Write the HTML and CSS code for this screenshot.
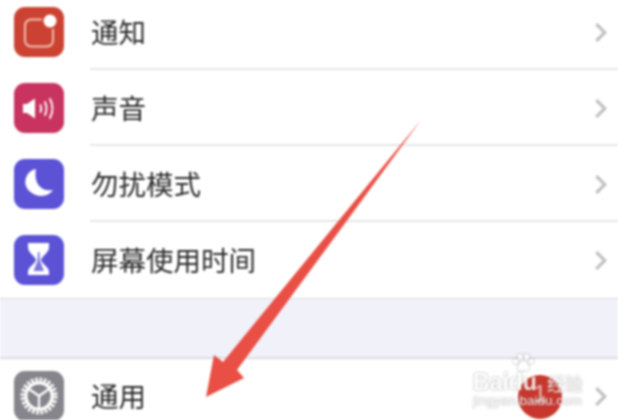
FILE: index.html
```html
<!DOCTYPE html>
<html lang="zh-CN">
<head>
    <meta charset="UTF-8">
    <meta name="viewport" content="width=device-width, initial-scale=1.0">
    <title>设置</title>
    <link rel="stylesheet" href="styles.css">
</head>
<body>

    <div class="screen">
        <ul class="group group-top">
            <li class="row">
                <span class="icon icon-red">
                    <svg viewBox="0 0 50 50"><rect x="11" y="12.500" width="28" height="27" rx="6" fill="none" stroke="#f4c3b8" stroke-width="1.900"/><circle cx="36" cy="14" r="8.500" fill="#cb4232"/><circle cx="36" cy="14" r="6.500" fill="#fff"/></svg>
                </span>
                <span class="label">通知</span>
                <svg class="chevron" viewBox="0 0 12 20"><path d="M2 2l8 8-8 8"/></svg>
            </li>
            <li class="row">
                <span class="icon icon-pink">
                    <svg viewBox="0 0 50 50"><path d="M9 21h4l8-5.500v20L13 30H9z" fill="#fff"/><g fill="none" stroke="#fff" stroke-width="1.900" stroke-linecap="round"><path d="M26.500 22q1.500 3.500 0 7"/><path d="M31 19q3 6.500 0 13"/><path d="M36 16q5 9.500 0 19"/></g></svg>
                </span>
                <span class="label">声音</span>
                <svg class="chevron" viewBox="0 0 12 20"><path d="M2 2l8 8-8 8"/></svg>
            </li>
            <li class="row">
                <span class="icon icon-purple">
                    <svg viewBox="0 0 50 50"><path d="M22 10C12 12 10 22 12 27 15 36 31 42 39 31 30 33 19 27 22 10z" fill="#fff"/></svg>
                </span>
                <span class="label">勿扰模式</span>
                <svg class="chevron" viewBox="0 0 12 20"><path d="M2 2l8 8-8 8"/></svg>
            </li>
            <li class="row row-last">
                <span class="icon icon-purple">
                    <svg viewBox="0 0 50 50"><path d="M14 8h21v4c0 6-7 9-8 13 1 4 8 7 8 12v3H14v-3c0-5 7-8 8-12-1-4-8-7-8-13z" fill="#fff"/><path d="M24 17h1.500l.5 9 4 10H19.500l4-10z" fill="#7d76de"/></svg>
                </span>
                <span class="label">屏幕使用时间</span>
                <svg class="chevron" viewBox="0 0 12 20"><path d="M2 2l8 8-8 8"/></svg>
            </li>
        </ul>

        <div class="gap"></div>

        <ul class="group group-bottom">
            <li class="row row-last">
                <span class="icon icon-gray">
                    <svg viewBox="0 0 50 50"><circle cx="25" cy="25" r="16" fill="none" stroke="#fff" stroke-width="5" stroke-dasharray="2.500 1.690"/><circle cx="25" cy="25" r="13" fill="none" stroke="#fff" stroke-width="3"/><g stroke="#fff" stroke-width="2.200" stroke-linecap="round"><path d="M25 25v12"/><path d="M25 25l-10-7"/><path d="M25 25l10-7"/></g></svg>
                </span>
                <span class="label">通用</span>
                <svg class="chevron" viewBox="0 0 12 20"><path d="M2 2l8 8-8 8"/></svg>
            </li>
        </ul>

        <svg class="arrow" viewBox="0 0 618 420"><path d="M421 120L237 370 244 378 206 397 214 355 223 362z" fill="#e94f45"/></svg>

        <div class="step-dot">1</div>

        <div class="watermark">
            <svg class="paw" viewBox="0 0 26 22"><g fill="#fff"><circle cx="5" cy="9" r="2.800"/><circle cx="10" cy="4" r="3"/><circle cx="17" cy="4" r="3"/><circle cx="22" cy="9" r="2.800"/><path d="M13.500 9c4 0 7 6 6 9-1 3-4 1-6 1s-5 2-6-1c-1-3 2-9 6-9z"/></g></svg>
            <div class="wm-title"><span class="wm-brand">Baidu</span><span class="wm-cn">经验</span></div>
            <div class="wm-url">jingyan.baidu.com</div>
        </div>
    </div>

</body>
</html>
```

FILE: styles.css
```css
* {
    box-sizing: border-box;
}
html, body {
    margin: 0;
    padding: 0;
    background-color: #fff;
}
.screen {
    position: relative;
    width: 618px;
    height: 420px;
    overflow: hidden;
    filter: blur(0.8px);
    font-family: "Noto Sans CJK SC", "Liberation Sans", sans-serif;
    color: #2c2c2c;
}
.group {
    list-style: none;
    margin: 0;
    padding: 0;
    background-color: #fff;
}
.group-top {
    margin-top: -6px;
    border-bottom: 1px solid #dcdce0;
}
.group-bottom .row {
    height: 74px;
}
.row {
    display: flex;
    align-items: center;
    height: 76px;
    margin-left: 14px;
    padding-right: 11px;
    position: relative;
}
.row::after {
    content: "";
    position: absolute;
    left: 76px;
    right: 0;
    bottom: 0;
    height: 2px;
    background-color: #e6e6e8;
}
.row-last::after {
    display: none;
}
.icon {
    width: 50px;
    height: 50px;
    border-radius: 11px;
    flex-shrink: 0;
}
.icon svg {
    display: block;
    width: 50px;
    height: 50px;
}
.icon-red {
    background-color: #cb4232;
}
.icon-pink {
    background-color: #c8335f;
}
.icon-purple {
    background-color: #5b52d6;
}
.icon-gray {
    background-color: #85858b;
}
.label {
    flex: 1;
    margin-left: 27px;
    font-size: 27.500px;
    line-height: 1;
}
.chevron {
    width: 13px;
    height: 21px;
    fill: none;
    stroke: #bfbfc2;
    stroke-width: 3;
}
.gap {
    height: 60px;
    background-color: #f1f1f9;
    border-bottom: 2px solid #dcdce0;
}
.arrow {
    position: absolute;
    left: 0;
    top: 0;
    width: 618px;
    height: 420px;
}
.step-dot {
    position: absolute;
    left: 518px;
    top: 375px;
    width: 44px;
    height: 44px;
    border-radius: 50%;
    background-color: #c8372d;
    color: #e9b8b2;
    font-family: "Liberation Sans", sans-serif;
    font-size: 24px;
    line-height: 38px;
    text-align: center;
}
.watermark {
    position: absolute;
    left: 473px;
    top: 353px;
    width: 110px;
    color: #fff;
    opacity: 0.85;
    font-family: "Liberation Sans", "Noto Sans CJK SC", sans-serif;
    text-shadow: 0 0 2px rgba(90, 90, 90, 0.8);
}
.paw {
    display: block;
    width: 26px;
    height: 20px;
    margin-left: 37px;
    filter: drop-shadow(0 0 1px rgba(90, 90, 90, 0.7));
}
.wm-title {
    display: flex;
    align-items: center;
    justify-content: space-between;
    height: 19px;
}
.wm-brand {
    font-size: 23px;
    font-weight: 700;
    line-height: 1;
}
.wm-cn {
    font-family: "Noto Sans CJK SC", sans-serif;
    font-size: 18px;
    line-height: 1;
}
.wm-url {
    margin-top: 2px;
    font-size: 13.500px;
    line-height: 14px;
    white-space: nowrap;
}
```
